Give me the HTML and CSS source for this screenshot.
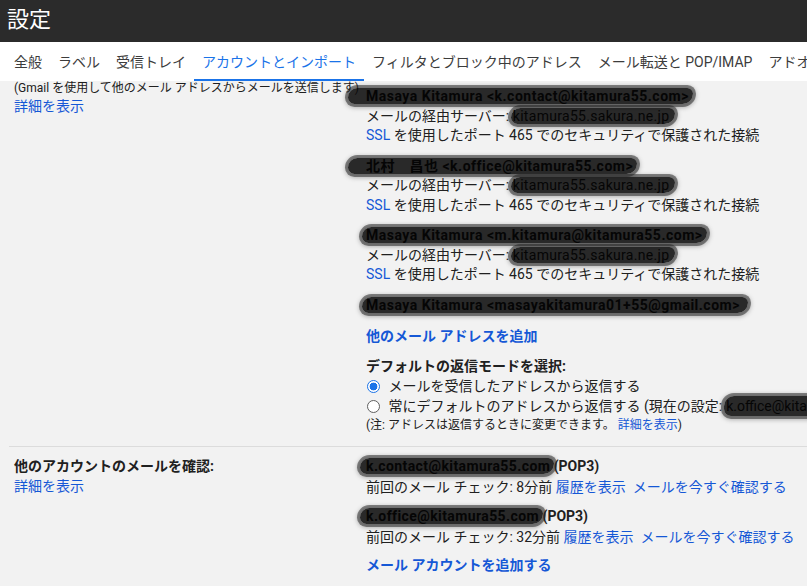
FILE: index.html
```html
<!DOCTYPE html>
<html lang="ja">
<head>
<meta charset="utf-8">
<title>設定</title>
<link rel="stylesheet" href="styles.css">
</head>
<body>
<header class="topbar"><h1 class="title">設定</h1></header>
<nav class="tabs">
  <span class="tab">全般</span>
  <span class="tab">ラベル</span>
  <span class="tab">受信トレイ</span>
  <span class="tab active">アカウントとインポート</span>
  <span class="tab">フィルタとブロック中のアドレス</span>
  <span class="tab">メール転送と POP/IMAP</span>
  <span class="tab">アドオン</span>
</nav>
<main class="content">
  <section class="row row-send">
    <div class="label-col label-send">
      <div class="small">(Gmail を使用して他のメール アドレスからメールを送信します)</div>
      <a class="link">詳細を表示</a>
    </div>
    <div class="value-col value-send">
      <div class="group">
        <div class="line"><span class="redact r-name1"><b>Masaya Kitamura &lt;k.contact@kitamura55.com&gt;</b></span></div>
        <div class="line">メールの経由サーバー: <span class="redact r-server">kitamura55.sakura.ne.jp</span></div>
        <div class="line"><a class="link">SSL</a> を使用したポート 465 でのセキュリティで保護された接続</div>
      </div>
      <div class="group">
        <div class="line"><span class="redact r-name2"><b>北村　昌也 &lt;k.office@kitamura55.com&gt;</b></span></div>
        <div class="line">メールの経由サーバー: <span class="redact r-server2">kitamura55.sakura.ne.jp</span></div>
        <div class="line"><a class="link">SSL</a> を使用したポート 465 でのセキュリティで保護された接続</div>
      </div>
      <div class="group">
        <div class="line"><span class="redact r-name3"><b>Masaya Kitamura &lt;m.kitamura@kitamura55.com&gt;</b></span></div>
        <div class="line">メールの経由サーバー: <span class="redact r-server3">kitamura55.sakura.ne.jp</span></div>
        <div class="line"><a class="link">SSL</a> を使用したポート 465 でのセキュリティで保護された接続</div>
      </div>
      <div class="group">
        <div class="line"><span class="redact r-name4"><b>Masaya Kitamura &lt;masayakitamura01+55@gmail.com&gt;</b></span></div>
      </div>
      <a class="link strong add-link">他のメール アドレスを追加</a>
      <div class="reply-title">デフォルトの返信モードを選択:</div>
      <label class="radio-row"><span class="radio checked"></span>メールを受信したアドレスから返信する</label>
      <label class="radio-row"><span class="radio"></span>常にデフォルトのアドレスから返信する (現在の設定: <span class="redact r-current">k.office@kitamura55.com</span>)</label>
      <div class="small note">(注: アドレスは返信するときに変更できます。 <a class="link">詳細を表示</a>)</div>
    </div>
  </section>
  <hr class="divider">
  <section class="row row-check">
    <div class="label-col">
      <div class="label-title">他のアカウントのメールを確認:</div>
      <a class="link">詳細を表示</a>
    </div>
    <div class="value-col">
      <div class="acct">
        <div class="line"><span class="redact r-acct1"><b>k.contact@kitamura55.com</b></span> <b>(POP3)</b></div>
        <div class="line">前回のメール チェック: 8分前 <a class="link">履歴を表示</a>&nbsp;&nbsp;<a class="link">メールを今すぐ確認する</a></div>
      </div>
      <div class="acct">
        <div class="line"><span class="redact r-acct2"><b>k.office@kitamura55.com</b></span> <b>(POP3)</b></div>
        <div class="line">前回のメール チェック: 32分前 <a class="link">履歴を表示</a>&nbsp;&nbsp;<a class="link">メールを今すぐ確認する</a></div>
      </div>
      <a class="link strong add-acct">メール アカウントを追加する</a>
    </div>
  </section>
</main>
</body>
</html>
```
FILE: styles.css
```css
html, body {
  margin: 0;
  padding: 0;
}
body {
  width: 807px;
  height: 586px;
  overflow: hidden;
  background: #f2f2f2;
  color: #202020;
  font-family: Roboto, "Noto Sans CJK JP", sans-serif;
  font-size: 14px;
}
.topbar {
  height: 42px;
  background: #2b2b2b;
  display: flex;
  align-items: center;
  padding-left: 7px;
}
.title {
  margin: 0;
  color: #fff;
  font-size: 22px;
  font-weight: 400;
  line-height: 1;
  margin-top: -2px;
}
.tabs {
  background: #fff;
  display: flex;
  padding-left: 6px;
  white-space: nowrap;
  overflow: hidden;
  height: 39px;
}
.tab {
  padding: 10px 8px 7px;
  line-height: 20px;
  color: #3c3c3c;
  border-bottom: 2px solid transparent;
  flex: none;
}
.tab.active {
  color: #1a73e8;
  border-bottom-color: #1a73e8;
}
.content {
  height: 505px;
  overflow: hidden;
}
.row {
  display: grid;
  grid-template-columns: 352px 1fr;
  padding-left: 14px;
  white-space: nowrap;
}
.label-col {
  display: flex;
  flex-direction: column;
  align-items: flex-start;
}
.label-send {
  margin-top: -1px;
}
.small {
  font-size: 12px;
  line-height: 16px;
}
.link {
  color: #1558d6;
  text-decoration: none;
  cursor: pointer;
}
.label-col .link {
  line-height: 20px;
}
.value-col {
  display: flex;
  flex-direction: column;
  align-items: flex-start;
}
.value-send {
  padding-top: 6px;
}
.group + .group {
  margin-top: 11px;
}
.line {
  line-height: 19.5px;
}
.strong {
  font-weight: 700;
}
.add-link {
  margin-top: 11px;
  line-height: 20px;
}
.reply-title {
  margin-top: 10px;
  font-weight: 700;
  line-height: 20px;
}
.radio-row {
  display: flex;
  align-items: center;
  line-height: 20px;
}
.radio {
  width: 11px;
  height: 11px;
  border: 1.5px solid #5f5f5f;
  border-radius: 50%;
  margin-right: 9px;
  margin-left: 0.5px;
  box-sizing: content-box;
  background: #fff;
  flex: none;
}
.radio.checked {
  border-color: #1a73e8;
  background: radial-gradient(circle, #1a73e8 0 3.6px, #fff 4.2px);
}
.note {
  line-height: 18px;
}
.divider {
  margin: 12px 0 0 9px;
  border: 0;
  border-top: 1px solid #dcdcdc;
  height: 0;
}
.row-check {
  margin-top: 9px;
}
.label-title {
  font-weight: 700;
  line-height: 20px;
}
.acct .line {
  line-height: 20.5px;
}
.acct + .acct {
  margin-top: 9px;
}
.add-acct {
  margin-top: 8px;
  line-height: 20px;
}
.redact {
  position: relative;
  color: #050505;
  background: rgba(8, 8, 8, 0.86);
  border-radius: 10px 6px 11px 7px;
  box-shadow: 0 0 0 3px rgba(30, 30, 30, 0.5), 0 1px 4px 3px rgba(60, 60, 60, 0.35);
  padding: 0 4px;
  margin: 0 -4px;
}
.redact b {
  font-weight: 700;
  letter-spacing: 0.5px;
}
.r-name1 {
  padding-left: 18px;
  margin-left: -18px;
}
.r-name2 {
  padding-left: 18px;
  margin-left: -18px;
}
.r-name3 {
  padding-left: 4px;
}
.r-name4 {
  padding-left: 4px;
  padding-right: 8px;
}
.r-server, .r-server2, .r-server3 {
  padding: 0 6px 0 2px;
  margin: 0 -6px 0 -2px;
  letter-spacing: 0.3px;
}
.r-current {
  padding: 0 40px 0 2px;
  margin: 0 0 0 2px;
}
.r-acct1 b, .r-acct2 b {
  letter-spacing: 0.4px;
}
.r-acct1, .r-acct2 {
  padding-left: 6px;
  margin-left: -6px;
}
```
